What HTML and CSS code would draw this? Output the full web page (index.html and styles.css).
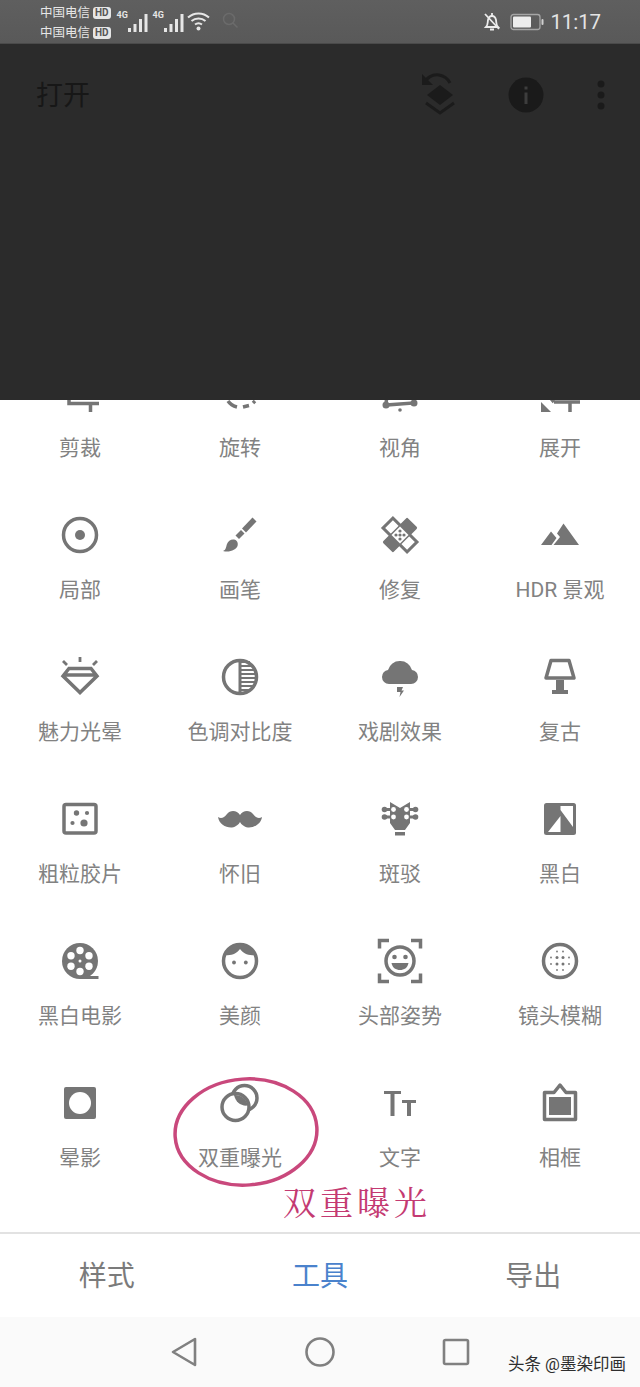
FILE: index.html
```html
<!DOCTYPE html>
<html lang="zh">
<head>
<meta charset="utf-8">
<title>Snapseed 工具</title>
<link rel="stylesheet" href="styles.css">
</head>
<body>
<div class="screen">
  <header class="status">
    <div class="carriers">
      <div class="carrier">中国电信<span class="hd">HD</span></div>
      <div class="carrier">中国电信<span class="hd">HD</span></div>
    </div>
    <div class="signal"><span class="net">4G</span>
      <svg class="bars" width="21" height="20" viewBox="0 0 21 20"><path d="M1 15h3v4H1zM6.500 11h3v8h-3zM12 6h3v13h-3zM17.500 1h3v18h-3z"/></svg>
    </div>
    <div class="signal"><span class="net">4G</span>
      <svg class="bars" width="21" height="20" viewBox="0 0 21 20"><path d="M1 15h3v4H1zM6.500 11h3v8h-3zM12 6h3v13h-3zM17.500 1h3v18h-3z"/></svg>
    </div>
    <svg class="wifi" width="23" height="20" viewBox="0 0 23 20"><g fill="none" stroke="#e6e6e6" stroke-width="2"><path d="M1 6.500c6-5.500 15-5.500 21 0"/><path d="M4.500 10c4-3.500 10-3.500 14 0"/><path d="M8 13.500c2-1.500 5-1.500 7 0"/></g><circle cx="11.500" cy="17.500" r="2" fill="#e6e6e6"/></svg>
    <svg class="search" width="17" height="17" viewBox="0 0 17 17"><circle cx="7" cy="7" r="5.500" fill="none" stroke="#6b6b6b" stroke-width="1.500"/><path d="M11 11l4.500 4.500" stroke="#6b6b6b" stroke-width="1.500"/></svg>
    <div class="status-right">
      <svg width="18" height="20" viewBox="0 0 18 20"><path d="M3 15c2-2 1.500-4 2-7 .5-2.500 2-4 4-4s3.500 1.500 4 4c.5 3 0 5 2 7z" fill="none" stroke="#ececec" stroke-width="1.800"/><path d="M9 1v3M7 17.500h4M2 2l14 15" stroke="#ececec" stroke-width="1.800"/></svg>
      <svg class="battery" width="35" height="18" viewBox="0 0 35 18"><rect x="1" y="1.500" width="29" height="15" rx="2.500" fill="none" stroke="#a5a5a5" stroke-width="1.300"/><rect x="3" y="3.500" width="18" height="11" rx="1" fill="#ededed"/><rect x="31.500" y="6" width="2" height="6" rx="1" fill="#cfcfcf"/></svg>
      <span class="time">11:17</span>
    </div>
  </header>

  <section class="dim">
    <h1 class="dim-title">打开</h1>
    <svg class="layers" width="36" height="46" viewBox="0 0 36 46"><path d="M4 12c2-6 8-10 15-9 6 1 9 4 11 8" fill="none" stroke="#1b1b1b" stroke-width="3"/><path d="M2 2v11h11z" fill="#1b1b1b"/><path d="M20 13l13 10-13 10L7 23z" fill="#1b1b1b"/><path d="M6 31l14 10 14-10" fill="none" stroke="#1b1b1b" stroke-width="3"/></svg>
    <svg class="info" width="36" height="36" viewBox="0 0 36 36"><circle cx="18" cy="18" r="17.500" fill="#1a1a1a"/><path d="M16.500 15.500h3V27h-3zM16.500 9.500h3v3h-3z" fill="#3d3d3d"/></svg>
    <svg class="more" width="8" height="30" viewBox="0 0 8 30"><circle cx="4" cy="4" r="3.500" fill="#1a1a1a"/><circle cx="4" cy="15" r="3.500" fill="#1a1a1a"/><circle cx="4" cy="26" r="3.500" fill="#1a1a1a"/></svg>
  </section>

  <main class="sheet">
    <div class="tools">
      <div class="tool">
        <svg class="ic" viewBox="0 0 40 40"><path d="M9 22v8.500h30M30.500 30v9" fill="none" stroke-width="3.500"/></svg>
        <span class="label">剪裁</span>
      </div>
      <div class="tool">
        <svg class="ic" viewBox="0 0 40 40"><path d="M8 28c2 3 5 5 9 6" fill="none" stroke-width="3.500"/><path d="M23 34l6-1.500M33 30l2-2" fill="none" stroke-width="3.500"/></svg>
        <span class="label">旋转</span>
      </div>
      <div class="tool">
        <svg class="ic" viewBox="0 0 40 40"><path d="M7 20l-1 12 28-2-1-10" fill="none" stroke-width="3.500"/><circle cx="6" cy="32" r="3.500"/><circle cx="34" cy="30" r="3.500"/><circle cx="20" cy="37" r="1.800"/></svg>
        <span class="label">视角</span>
      </div>
      <div class="tool">
        <svg class="ic" viewBox="0 0 40 40"><path d="M1 39V29l10 10z"/><path d="M14 29h26M30 29v10M8 22l6 7" fill="none" stroke-width="3.500"/></svg>
        <span class="label">展开</span>
      </div>

      <div class="tool">
        <svg class="ic" viewBox="0 0 40 40"><circle cx="20" cy="20" r="16.500" fill="none" stroke-width="3.500"/><circle cx="20" cy="20" r="5"/></svg>
        <span class="label">局部</span>
      </div>
      <div class="tool">
        <svg class="ic" viewBox="0 0 40 40"><path d="M34.500 4.500L24 15.500" fill="none" stroke-width="5.500"/><path d="M3 36c3-1 3-4 4-7 1-3 4-5 7-4.500s4.500 3.500 3.500 6.500c-1 3.500-8 7-14.500 5z"/><path d="M15.500 20.500l5.500-5.500 3.500 3.500-5.500 5.500z"/></svg>
        <span class="label">画笔</span>
      </div>
      <div class="tool">
        <svg class="ic" viewBox="0 0 40 40"><rect x="3" y="13" width="34" height="14" transform="rotate(45 20 20)" fill="#fff" stroke-width="3"/><rect x="2.500" y="12.500" width="35" height="15" rx="1.500" transform="rotate(-45 20 20)"/><rect x="14" y="14" width="12" height="12" transform="rotate(45 20 20)" fill="#fff"/><g><circle cx="20" cy="16" r="1.600"/><circle cx="16" cy="20" r="1.600"/><circle cx="24" cy="20" r="1.600"/><circle cx="20" cy="24" r="1.600"/><circle cx="20" cy="20" r="1.600"/></g></svg>
        <span class="label">修复</span>
      </div>
      <div class="tool">
        <svg class="ic" viewBox="0 0 40 40"><path d="M1 30l10-13.500 5.500 6.500-5 7zM23.500 8.500L39 30H13.500l6.500-8-3-3.500z"/></svg>
        <span class="label label-latin">HDR 景观</span>
      </div>

      <div class="tool">
        <svg class="ic" viewBox="0 0 40 40"><path d="M9 11.500h22l6 7.500-17 16.500L3 19zM4 18h32" fill="none" stroke-width="3.500"/><path d="M20 0v5M3 4l4 4M37 4l-4 4" fill="none" stroke-width="2.800"/></svg>
        <span class="label">魅力光晕</span>
      </div>
      <div class="tool">
        <svg class="ic" viewBox="0 0 40 40"><circle cx="20" cy="20" r="16.500" fill="none" stroke-width="3.500"/><path d="M20 5h10M20 9h14M20 13h16M20 17h17M20 21h17M20 25h16M20 29h14M20 33h10" fill="none" stroke-width="2.200"/><path d="M20 3v34" fill="none" stroke-width="3"/></svg>
        <span class="label">色调对比度</span>
      </div>
      <div class="tool">
        <svg class="ic" viewBox="0 0 40 40"><path d="M9 27a7 7 0 0 1-7-7 7 7 0 0 1 6-7A12 12 0 0 1 20 4a12 12 0 0 1 12 9 7 7 0 0 1 6 7 7 7 0 0 1-7 7z"/><path d="M17 30h6l-1.500 3.500H24L19.500 40l1-5H17z"/></svg>
        <span class="label">戏剧效果</span>
      </div>
      <div class="tool">
        <svg class="ic" viewBox="0 0 40 40"><path d="M11 3.500h18l5 17.500H6z" fill="none" stroke-width="3.500" stroke-linejoin="round"/><path d="M16 23h8v10h-8zM12 33h16v4H12z"/></svg>
        <span class="label">复古</span>
      </div>

      <div class="tool">
        <svg class="ic" viewBox="0 0 40 40"><rect x="4" y="5.500" width="32" height="28.500" rx="2" fill="none" stroke-width="3.500"/><circle cx="16.500" cy="14" r="2.700"/><circle cx="27" cy="14" r="2.100"/><circle cx="12.500" cy="24" r="2.100"/><circle cx="24" cy="24" r="3.600"/></svg>
        <span class="label">粗粒胶片</span>
      </div>
      <div class="tool">
        <svg class="ic" viewBox="0 0 40 40"><path d="M20 16C17 11 10 11 7 15 4 19 1 20-2 18-1 25 6 29 12 28.500 16 28 19 25 20 23 21 25 24 28 28 28.500 34 29 41 25 42 18 39 20 36 19 33 15 30 11 23 11 20 16z"/></svg>
        <span class="label">怀旧</span>
      </div>
      <div class="tool">
        <svg class="ic" viewBox="0 0 40 40"><path d="M10 3l10 6 10-6v21l-5 7H15l-5-7z"/><path d="M15 33h10v3.500H15z"/><path d="M4 10.500h8M4 18h8M28 10.500h8M28 18h8" fill="none" stroke-width="3"/><g><circle cx="4.500" cy="10.500" r="2.800"/><circle cx="4.500" cy="18" r="2.800"/><circle cx="35.500" cy="10.500" r="2.800"/><circle cx="35.500" cy="18" r="2.800"/></g><g fill="#fff"><circle cx="13.500" cy="10.500" r="2.400"/><circle cx="13.500" cy="18" r="2.400"/><circle cx="26.500" cy="10.500" r="2.400"/><circle cx="26.500" cy="18" r="2.400"/></g></svg>
        <span class="label">斑驳</span>
      </div>
      <div class="tool">
        <svg class="ic" viewBox="0 0 40 40"><rect x="4" y="4" width="32" height="32" rx="2.500"/><path d="M20.500 7H33v21L20.500 11zM8 33l12.500-16v16z" fill="#fff"/></svg>
        <span class="label">黑白</span>
      </div>

      <div class="tool">
        <svg class="ic" viewBox="0 0 40 40"><circle cx="20" cy="20" r="18"/><path d="M20 35h18.500v3H20z"/><g fill="#fff"><circle cx="20" cy="9.500" r="3.700"/><circle cx="20" cy="30.500" r="3.700"/><circle cx="11" cy="14.700" r="3.700"/><circle cx="29" cy="14.700" r="3.700"/><circle cx="11" cy="25.300" r="3.700"/><circle cx="29" cy="25.300" r="3.700"/><circle cx="20" cy="20" r="1.500"/></g></svg>
        <span class="label">黑白电影</span>
      </div>
      <div class="tool">
        <svg class="ic" viewBox="0 0 40 40"><circle cx="20" cy="20" r="16.500" fill="none" stroke-width="3.500"/><path d="M5 14A16 16 0 0 1 35 14C28 15 23 12 20 8 17 12 12 15 5 14z"/><circle cx="14" cy="21.500" r="1.900"/><circle cx="25.800" cy="21.500" r="1.900"/></svg>
        <span class="label">美颜</span>
      </div>
      <div class="tool">
        <svg class="ic" viewBox="0 0 40 40"><path d="M9-.500H-.500v8M31-.500h9.500v8M9 40.500H-.500v-8M31 40.500h9.500v-8" fill="none" stroke-width="3.500"/><circle cx="20" cy="20" r="14" fill="none" stroke-width="3.500"/><circle cx="14.500" cy="16" r="2.300"/><circle cx="25.500" cy="16" r="2.300"/><path d="M11.500 22h17c-1 5-4.500 7-8.500 7s-7.500-2-8.500-7z"/></svg>
        <span class="label">头部姿势</span>
      </div>
      <div class="tool">
        <svg class="ic" viewBox="0 0 40 40"><circle cx="20" cy="20" r="16.500" fill="none" stroke-width="3.500"/><g><circle cx="17" cy="16.500" r="1.500"/><circle cx="23" cy="16.500" r="1.500"/><circle cx="17" cy="23" r="1.500"/><circle cx="23" cy="23" r="1.500"/><circle cx="11" cy="16.500" r=".9"/><circle cx="29" cy="16.500" r=".9"/><circle cx="11" cy="23" r=".9"/><circle cx="29" cy="23" r=".9"/><circle cx="17" cy="10.500" r=".9"/><circle cx="23" cy="10.500" r=".9"/><circle cx="17" cy="29" r=".9"/><circle cx="23" cy="29" r=".9"/></g></svg>
        <span class="label">镜头模糊</span>
      </div>

      <div class="tool">
        <svg class="ic" viewBox="0 0 40 40"><rect x="4" y="4" width="32" height="32" rx="2"/><circle cx="20" cy="20" r="11" fill="#fff"/></svg>
        <span class="label">晕影</span>
      </div>
      <div class="tool">
        <svg class="ic" viewBox="0 0 40 40"><circle cx="24.500" cy="15" r="12.500" fill="none" stroke-width="3.500"/><circle cx="15.500" cy="24" r="13.500" fill="#fff" stroke-width="3.500"/><path d="M14 12c6.500-.5 12 3 14 10.500-7 1-12.500-3.500-14-10.500z"/></svg>
        <span class="label">双重曝光</span>
      </div>
      <div class="tool">
        <svg class="ic" viewBox="0 0 40 40"><path d="M4 8h17v3h-6.500v22h-4V11H4zM22 17h14v3h-5v13h-4V20h-5z"/></svg>
        <span class="label">文字</span>
      </div>
      <div class="tool">
        <svg class="ic" viewBox="0 0 40 40"><path d="M4.500 9.500H14L20 2l6 7.500h9.500v27h-31z" fill="none" stroke-width="3.500" stroke-linejoin="round"/><rect x="9" y="14" width="22" height="18"/></svg>
        <span class="label">相框</span>
      </div>
    </div>
  </main>

  <nav class="tabs">
    <span class="tab">样式</span>
    <span class="tab tab-active">工具</span>
    <span class="tab">导出</span>
  </nav>

  <footer class="navbar">
    <svg width="28" height="32" viewBox="0 0 28 32"><path d="M25 3v26L3 16z" fill="none" stroke="#808080" stroke-width="2.600" stroke-linejoin="round"/></svg>
    <svg width="30" height="30" viewBox="0 0 30 30"><circle cx="15" cy="15" r="13.500" fill="none" stroke="#808080" stroke-width="2.600"/></svg>
    <svg width="28" height="28" viewBox="0 0 28 28"><rect x="2" y="2" width="24" height="24" rx="1.500" fill="none" stroke="#808080" stroke-width="2.600"/></svg>
    <span class="watermark">头条 @墨染印画</span>
  </footer>

  <svg class="ring" width="148" height="114" viewBox="0 0 148 114"><ellipse cx="73" cy="56" rx="71" ry="53" fill="none" stroke="#c9487c" stroke-width="3.500" transform="rotate(-4 73 56)"/></svg>
  <span class="note">双重曝光</span>
</div>
</body>
</html>
```

FILE: styles.css
```css
* { box-sizing: border-box; }

html, body {
  margin: 0;
  padding: 0;
  background: #fff;
}

.screen {
  position: relative;
  display: flex;
  flex-direction: column;
  width: 640px;
  height: 1387px;
  overflow: hidden;
  font-family: Roboto, "Noto Sans CJK SC", sans-serif;
}

.status {
  display: flex;
  align-items: center;
  flex: 0 0 44px;
  padding: 2px 39px 0 40px;
  background: linear-gradient(#5f5f5f, #595959);
  border-bottom: 1px solid #4a4a4a;
  color: #e6e6e6;
}

.carriers {
  display: flex;
  flex-direction: column;
  gap: 2px;
  margin-right: 5px;
  font-size: 12.500px;
  line-height: 18px;
}

.carrier {
  display: flex;
  align-items: center;
}

.hd {
  margin-left: 3px;
  padding: 0 2px;
  border-radius: 3px;
  background: #e6e6e6;
  color: #555;
  font-size: 10px;
  font-weight: 700;
  line-height: 12px;
}

.signal {
  position: relative;
  display: flex;
  width: 36px;
  height: 24px;
  justify-content: flex-end;
  align-items: flex-end;
  padding-right: 4px;
  margin-top: -4px;
}

.net {
  position: absolute;
  left: 1px;
  top: 1px;
  font-size: 9px;
  font-weight: 700;
}

.bars { fill: #e6e6e6; }

.wifi { margin-left: -1px; margin-top: -4px; }

.search { margin-left: 12px; margin-top: -4px; }

.status-right {
  display: flex;
  align-items: center;
  gap: 9px;
  margin-left: auto;
  margin-top: -2px;
}

.battery { margin-left: 0; margin-right: -4px; }

.time {
  font-size: 20.500px;
  letter-spacing: -.1px;
  color: #e4e4e4;
}

.dim {
  display: flex;
  align-items: flex-start;
  flex: 0 0 356px;
  padding: 29px 35px 0 36px;
  background: #2b2b2b;
}

.dim-title {
  margin: 1px auto 0 0;
  font-size: 27px;
  font-weight: 400;
  line-height: 44px;
  color: #171717;
}

.layers { margin: -1px 0 0 0; }

.info { margin: 4px 0 0 52px; }

.more { margin: 7px 0 0 53px; }

.sheet {
  flex: 0 0 832px;
  overflow: hidden;
  background: #fff;
}

.tools {
  display: grid;
  grid-template-columns: repeat(4, 160px);
  grid-auto-rows: 142px;
  margin-top: -42px;
}

.tool {
  display: flex;
  flex-direction: column;
  align-items: center;
  padding-top: 15px;
}

.ic {
  width: 40px;
  height: 40px;
  overflow: visible;
  fill: #757575;
  stroke: #757575;
  stroke-width: 0;
}

.label {
  margin-top: 23px;
  font-size: 21px;
  line-height: 24px;
  color: #828282;
  white-space: nowrap;
}

.label-latin { font-size: 21px; }

.tabs {
  display: grid;
  grid-template-columns: repeat(3, 1fr);
  align-items: center;
  flex: 0 0 85px;
  padding-top: 3px;
  border-top: 2px solid #e2e2e2;
  background: #fff;
}

.tab {
  font-size: 28px;
  line-height: 36px;
  text-align: center;
  color: #7b7b7b;
}

.tab-active { color: #4a82cc; }

.navbar {
  position: relative;
  display: flex;
  align-items: center;
  justify-content: center;
  gap: 107px;
  flex: 1;
  background: #fafafa;
}

.watermark {
  position: absolute;
  left: 508px;
  top: 38px;
  font-size: 16.500px;
  line-height: 20px;
  color: #2e2e2e;
  white-space: nowrap;
}

.ring {
  position: absolute;
  left: 173px;
  top: 1076px;
}

.note {
  position: absolute;
  left: 283px;
  top: 1179px;
  font-family: "Noto Serif CJK SC", serif;
  font-size: 33px;
  line-height: 44px;
  letter-spacing: 4px;
  color: #c43a72;
  white-space: nowrap;
}
```
